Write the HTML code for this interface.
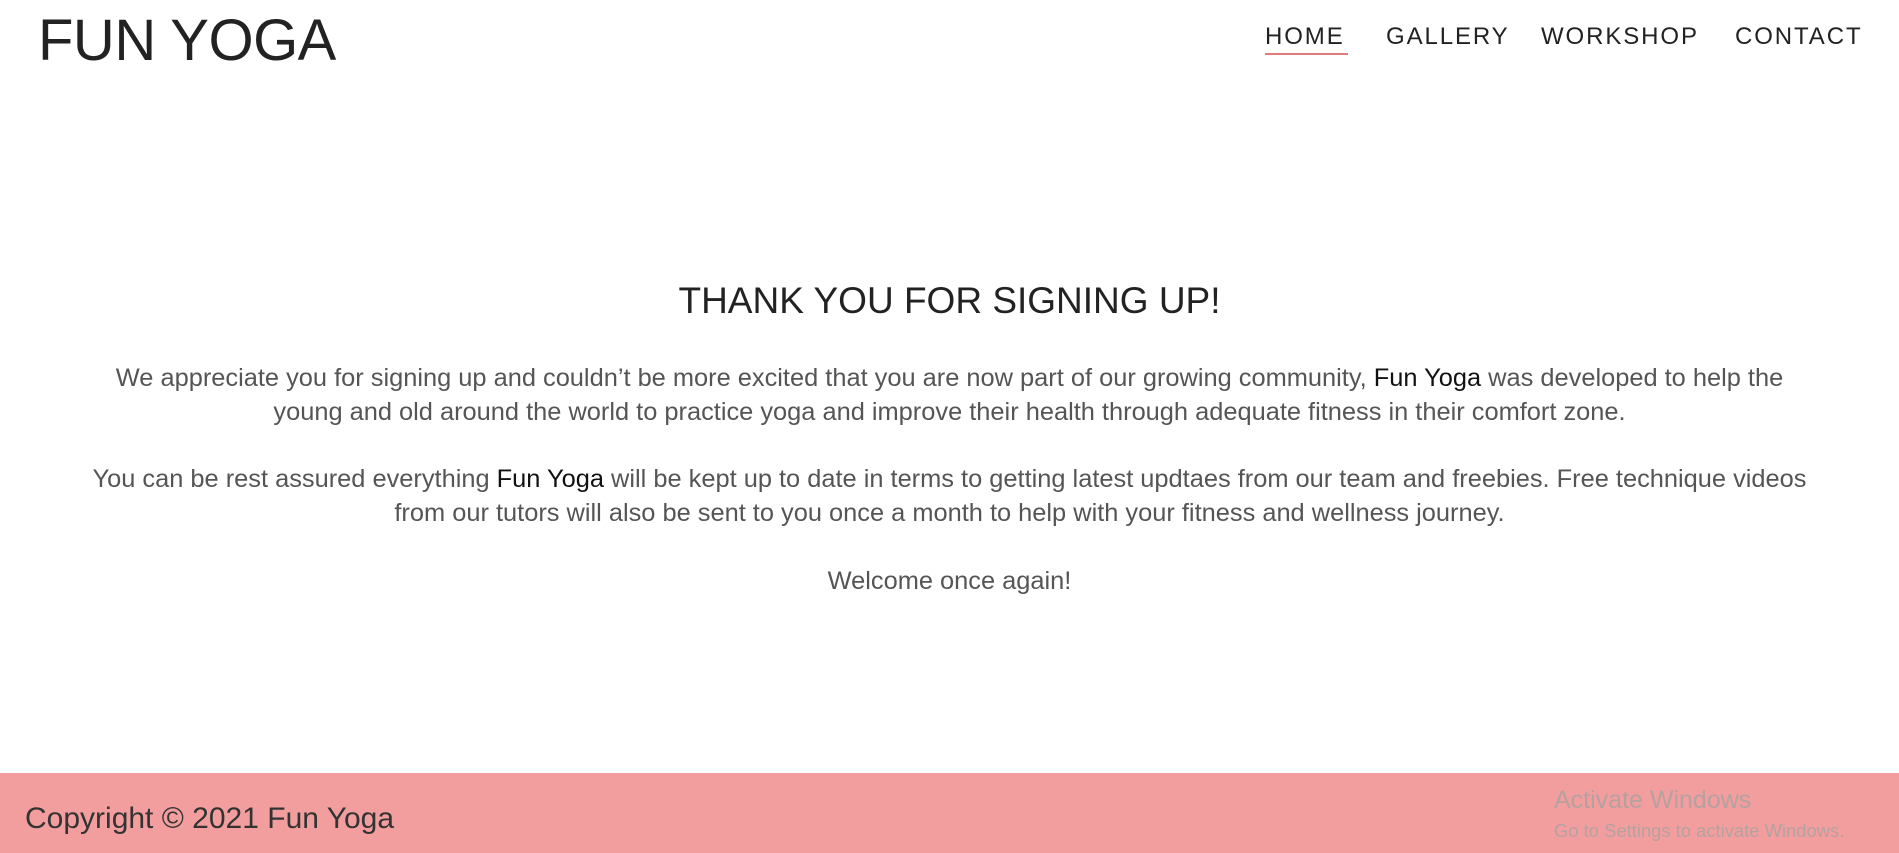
<!DOCTYPE html>
<html><head><meta charset="utf-8"><style>
*{margin:0;padding:0;box-sizing:border-box}
html,body{width:1899px;height:853px;overflow:hidden;background:#fff;font-family:"Liberation Sans",sans-serif;color:#222}
.logo{position:absolute;left:38px;top:6px;font-size:58px;line-height:70px;color:#222;letter-spacing:-0.5px}
.nav a{position:absolute;top:23px;font-size:24px;letter-spacing:1.9px;color:#222;text-decoration:none;line-height:28px;white-space:nowrap}
.ul{position:absolute;left:1265px;top:53px;width:83px;height:2px;background:#e57878}
h1{position:absolute;left:0;width:1899px;top:280px;text-align:center;font-weight:normal;font-size:37px;line-height:42px;color:#222}
.p{position:absolute;left:0;width:1899px;text-align:center;font-size:25.4px;line-height:34px;color:#555;white-space:nowrap}
.p b{font-weight:normal;color:#111}
footer{position:absolute;left:0;top:773px;width:1899px;height:80px;background:#f39e9e}
.copy{position:absolute;left:25px;top:29px;font-size:30px;color:#333}
.act{position:absolute;left:1554px;top:13px;font-size:25px;color:#b7a0a0}
.act2{position:absolute;left:1554px;top:47px;font-size:18.4px;color:#b7a0a0}
</style></head><body>
<div class="logo">FUN YOGA</div>
<div class="nav">
<a style="left:1265px">HOME</a>
<a style="left:1386px">GALLERY</a>
<a style="left:1541px">WORKSHOP</a>
<a style="left:1735px">CONTACT</a>
</div>
<div class="ul"></div>
<h1>THANK YOU FOR SIGNING UP!</h1>
<div class="p" style="top:361px">We appreciate you for signing up and couldn’t be more excited that you are now part of our growing community, <b>Fun Yoga</b> was developed to help the<br>young and old around the world to practice yoga and improve their health through adequate fitness in their comfort zone.</div>
<div class="p" style="top:462px">You can be rest assured everything <b>Fun Yoga</b> will be kept up to date in terms to getting latest updtaes from our team and freebies. Free technique videos<br>from our tutors will also be sent to you once a month to help with your fitness and wellness journey.</div>
<div class="p" style="top:564px">Welcome once again!</div>
<footer>
<div class="copy">Copyright © 2021 Fun Yoga</div>
<div class="act">Activate Windows</div>
<div class="act2">Go to Settings to activate Windows.</div>
</footer>
</body></html>
